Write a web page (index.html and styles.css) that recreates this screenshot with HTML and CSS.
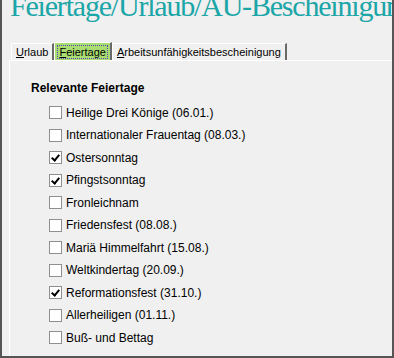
FILE: index.html
```html
<!DOCTYPE html>
<html lang="de">
<head>
    <meta charset="UTF-8">
    <title>Feiertage/Urlaub/AU-Bescheinigung</title>
    <link rel="stylesheet" href="styles.css">
</head>
<body>
    <div class="window">
        <h1 class="title">Feiertage/Urlaub/AU-Bescheinigung</h1>

        <div class="tabs">
            <div class="tab"><u>U</u>rlaub</div>
            <div class="tab active"><span class="focus"><u>F</u>eiertage</span></div>
            <div class="tab"><u>A</u>rbeitsunfähigkeitsbescheinigung</div>
        </div>

        <div class="panel">
            <h3>Relevante Feiertage</h3>
            <ul class="holidays">
                <li><span class="box"></span>Heilige Drei Könige (06.01.)</li>
                <li><span class="box"></span>Internationaler Frauentag (08.03.)</li>
                <li><span class="box checked"></span>Ostersonntag</li>
                <li><span class="box checked"></span>Pfingstsonntag</li>
                <li><span class="box"></span>Fronleichnam</li>
                <li><span class="box"></span>Friedensfest (08.08.)</li>
                <li><span class="box"></span>Mariä Himmelfahrt (15.08.)</li>
                <li><span class="box"></span>Weltkindertag (20.09.)</li>
                <li><span class="box checked"></span>Reformationsfest (31.10.)</li>
                <li><span class="box"></span>Allerheiligen (01.11.)</li>
                <li><span class="box"></span>Buß- und Bettag</li>
            </ul>
        </div>
    </div>
</body>
</html>
```

FILE: styles.css
```css
body {
    margin: 0;
    background-color: #f0f0f0;
    font-family: "Liberation Sans", Arial, sans-serif;
    font-size: 12px;
    color: #000;
}
.window {
    height: 358px;
    box-sizing: border-box;
    border: 2px solid #555;
    border-top: none;
    overflow: hidden;
    display: flex;
    flex-direction: column;
}
.title {
    margin: 0 0 0 8px;
    height: 20px;
    line-height: 12px;
    font-family: "Liberation Serif", serif;
    font-weight: normal;
    font-size: 30px;
    letter-spacing: -1.2px;
    color: #1ba6a8;
    white-space: nowrap;
}
.tabs {
    display: flex;
    margin: 22px 0 0 9px;
    height: 18px;
    align-items: flex-end;
    font-size: 11px;
}
.tab {
    height: 17px;
    line-height: 17px;
    padding: 0 4px;
    box-sizing: border-box;
    border-top: 1px solid #fff;
    border-left: 1px solid #fff;
    border-right: 2px solid #696969;
}
.tab.active {
    height: 19px;
    line-height: 18px;
    background-color: #a9dd72;
    margin-bottom: -1px;
    padding: 0 3px;
}
.focus {
    outline: 1px dotted #5a3fc0;
    outline-offset: 0;
    padding: 0 1px;
}
.panel {
    flex: 1;
    margin-left: 7px;
    border-top: 1px solid #fff;
    border-left: 1px solid #fff;
    padding: 20px 0 0 21px;
}
.panel h3 {
    margin: 0 0 11px;
    font-size: 12px;
    font-weight: bold;
}
.holidays {
    list-style: none;
    margin: 0;
    padding: 0 0 0 18px;
    display: flex;
    flex-direction: column;
    gap: 9px;
}
.holidays li {
    display: flex;
    align-items: center;
    height: 13.5px;
    gap: 4px;
}
.box {
    width: 11px;
    height: 11px;
    border: 1px solid #8e8f8f;
    background-color: #fff;
    position: relative;
}
.box.checked::after {
    content: "";
    position: absolute;
    left: 3px;
    top: 1px;
    width: 3px;
    height: 6px;
    border: solid #000;
    border-width: 0 2px 2px 0;
    transform: rotate(40deg);
}
```
